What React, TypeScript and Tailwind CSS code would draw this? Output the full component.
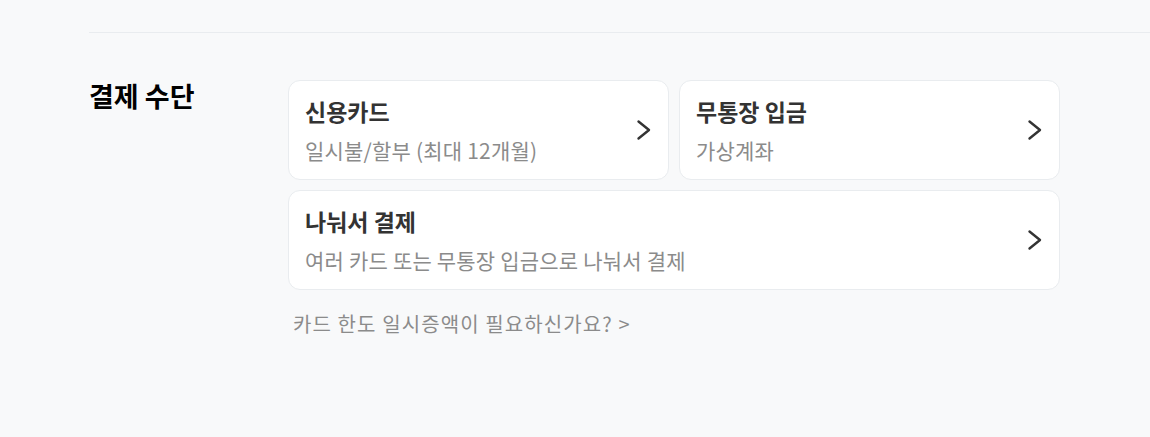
import React from 'react';

const font = { fontFamily: '"Noto Sans CJK KR", "Noto Sans", sans-serif' };

function Chevron() {
  return (
    <svg width="24" height="24" viewBox="0 0 24 24" fill="none" stroke="#333" strokeWidth="2.4" strokeLinecap="round" strokeLinejoin="round">
      <path d="M6.5 3.5l10.5 8.5-10.5 8.5" />
    </svg>
  );
}

function PayCard({ title, desc, wide }: { title: string; desc: string; wide?: boolean }) {
  return (
    <button
      type="button"
      className={`flex items-center justify-between bg-white border border-[#e9ecef] rounded-xl h-[100px] pl-4 pr-3 text-left ${wide ? 'col-span-2' : ''}`}
    >
      <div className="flex flex-col gap-[10px]">
        <span className="text-[23px] font-bold text-[#333] leading-[30px]">{title}</span>
        <span className="text-[21px] tracking-[0.2px] text-[#8b8b8b] leading-[28px]">{desc}</span>
      </div>
      <Chevron />
    </button>
  );
}

export default function App() {
  return (
    <div className="min-h-[437px] bg-[#f8f9fa] pt-8" style={font}>
      <div className="ml-[89px] border-t border-[#e9ecef]">
        <div className="flex pt-[47px]">
          <h2 className="w-[199px] text-[27px] font-bold text-black leading-[32px]">결제 수단</h2>
          <div className="w-[772px]">
            <div className="grid grid-cols-2 gap-[10px]">
              <PayCard title="신용카드" desc="일시불/할부 (최대 12개월)" />
              <PayCard title="무통장 입금" desc="가상계좌" />
              <PayCard title="나눠서 결제" desc="여러 카드 또는 무통장 입금으로 나눠서 결제" wide />
            </div>
            <button type="button" className="mt-[20px] pl-[5px] text-[20px] tracking-[1.1px] text-[#8b8b8b] leading-[28px]">
              카드 한도 일시증액이 필요하신가요? &gt;
            </button>
          </div>
        </div>
      </div>
    </div>
  );
}
